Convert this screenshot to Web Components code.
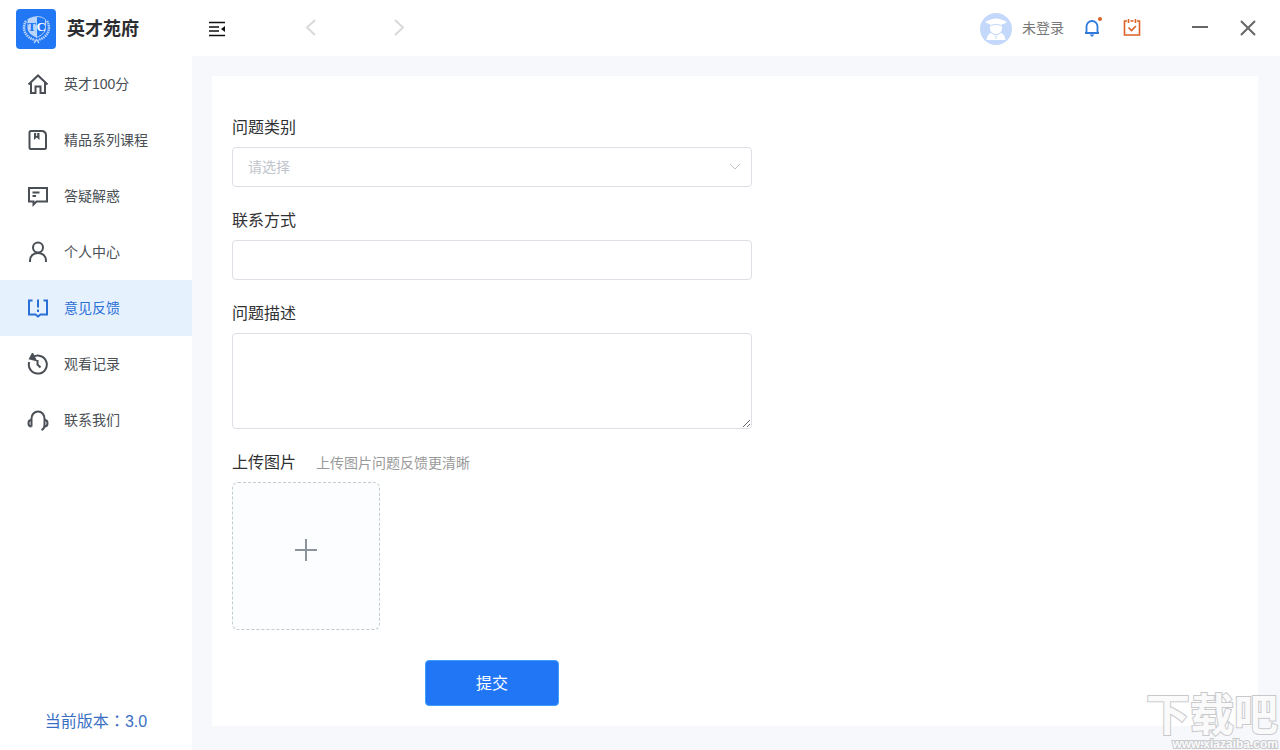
<!DOCTYPE html>
<html lang="zh-CN">
<head>
<meta charset="utf-8">
<meta name="viewport" content="width=device-width, initial-scale=1">
<title>英才苑府</title>
<style>
  html, body {
    height: 100%;
    margin: 0;
  }
  body {
    font-family: "Liberation Sans", "Noto Sans CJK SC", sans-serif;
    font-size: 14px;
    color: #303133;
  }
</style>
</head>
<body>
<yc-app></yc-app>

<script>
/**
 * Creates a template element from markup.
 *
 * @param {string} html The markup.
 * @returns {HTMLTemplateElement} The template.
 */
function createTemplate (html) {
  const template = document.createElement('template')
  template.innerHTML = html
  return template
}

/**
 * Base class that clones the static template of the subclass into a shadow root.
 */
class YcElement extends HTMLElement {
  /**
   * Attaches the shadow root.
   */
  constructor () {
    super()
    this.attachShadow({ mode: 'open' })
    this.shadowRoot.appendChild(this.constructor.template.content.cloneNode(true))
  }
}

const icons = {
  home: '<path d="M1.500 11.500 11 2.500l9.500 9M4 10V20h4.500v-6.500h5V20H18V10"/>',
  course: '<path d="M4 2h10.500Q19 2 19 6.500V18.500a1.500 1.500 0 0 1-1.500 1.500H4a1.500 1.500 0 0 1-1.500-1.500v-15A1.500 1.500 0 0 1 4 2z"/><path d="M7 4h5.500v7L9.700 8.500 7 11z" fill="currentColor" stroke="none"/><path d="M9.700 4v3" stroke="#fff" stroke-width="1"/>',
  question: '<path d="M2 3h18v13.500H9.500L6.500 19.500V16.500H2z"/><path d="M5.500 7.500h7M5.500 11h3.500"/>',
  person: '<circle cx="11" cy="6.500" r="5"/><path d="M3 21v-1.500c0-4.500 3.500-7.500 8-7.500s8 3 8 7.500V21"/>',
  feedback: '<path d="M5.500 3.500H2v14h6.500L11 19.500l2.500-2H20v-14h-3.500"/><path d="M11 2.500v8M11 12.500v2.500"/>',
  history: '<path d="M6 4A9 9 0 1 1 2.200 9"/><path d="M5.500 1 3 5.500l5.500 1.500z" fill="currentColor"/><path d="M10.500 7v4.500l3 3"/>',
  contact: '<path d="M4.500 17.500V9.500a6.500 7 0 0 1 13 0v7q0 3-3 4.500"/><path d="M4.500 11c-2 0-3 1.300-3 3.200s1 3.300 3 3.300M17.500 11c2 0 3 1.300 3 3.200s-1 3.300-3 3.300"/>'
}

customElements.define('yc-nav-item',
  /**
   * Represents one entry of the side menu.
   */
  class extends YcElement {
    static template = createTemplate(`
      <style>
        :host {
          display: block;
          color: #4a4f55;
        }
        :host([active]) {
          background-color: #e6f1fe;
          color: #2a6fd6;
        }
        a {
          display: flex;
          align-items: center;
          gap: 15px;
          height: 56px;
          padding: 0 27px;
          color: inherit;
          text-decoration: none;
        }
        span {
          padding-bottom: 2px;
        }
        svg {
          flex: none;
          width: 22px;
          height: 22px;
          fill: none;
          stroke: currentColor;
          stroke-width: 2;
        }
      </style>
      <a href="#"><svg viewBox="0 0 22 22" aria-hidden="true"></svg><span><slot></slot></span></a>
    `)

    /**
     * Called after the element is inserted to the DOM.
     */
    connectedCallback () {
      this.shadowRoot.querySelector('svg').innerHTML = icons[this.getAttribute('icon')]
      if (this.hasAttribute('active')) {
        this.shadowRoot.querySelector('a').setAttribute('aria-current', 'page')
      }
    }
  }
)

customElements.define('yc-brand',
  /**
   * Represents the logo and the name of the application.
   */
  class extends YcElement {
    static template = createTemplate(`
      <style>
        :host {
          display: flex;
          align-items: center;
          gap: 11px;
          height: 58px;
          padding: 0 16px;
        }
        svg {
          flex: none;
          width: 40px;
          height: 40px;
        }
        text {
          font-family: "Liberation Serif", serif;
          font-size: 13px;
          font-weight: bold;
        }
        h1 {
          margin: 0;
          font-size: 18px;
          line-height: 40px;
          color: #2b2d30;
        }
      </style>
      <svg viewBox="0 0 40 40" aria-hidden="true">
        <rect width="40" height="40" rx="4" fill="#2277f5"/>
        <path d="M20.500 7.500c-5 0-8 2-9 3v8c0 5 4 8 9 10z" fill="#b9d4fd"/>
        <path d="M20.500 7.500c5 0 8 2 9 3v8c0 5-4 8-9 10z" fill="none" stroke="#b9d4fd"/>
        <path d="M10 12C5 20 10 29 19 31M31 12c5 8 0 17-9 19" fill="none" stroke="#b9d4fd" stroke-width="2.500" stroke-dasharray="1.500 .7"/>
        <path d="m18 34 2.500-3.500L23 34" fill="none" stroke="#b9d4fd" stroke-width="1.300"/>
        <text x="11.500" y="22" fill="#2277f5">T</text>
        <text x="20.500" y="22" fill="#fff">C</text>
      </svg>
      <h1><slot></slot></h1>
    `)
  }
)

customElements.define('yc-sidebar',
  /**
   * Represents the side menu.
   */
  class extends YcElement {
    static template = createTemplate(`
      <style>
        :host {
          display: flex;
          flex-direction: column;
          width: 192px;
          flex: none;
          background-color: #fff;
        }
        yc-brand {
          margin-bottom: -2px;
        }
        nav {
          flex: 1;
        }
        footer {
          padding: 0 0 16px;
          font-size: 16px;
          line-height: 24px;
          text-align: center;
          color: #3a6fc4;
        }
        .colon {
          font-family: "Noto Sans CJK TC", sans-serif;
          line-height: 1;
        }
      </style>
      <yc-brand>英才苑府</yc-brand>
      <nav>
        <yc-nav-item icon="home">英才100分</yc-nav-item>
        <yc-nav-item icon="course">精品系列课程</yc-nav-item>
        <yc-nav-item icon="question">答疑解惑</yc-nav-item>
        <yc-nav-item icon="person">个人中心</yc-nav-item>
        <yc-nav-item icon="feedback" active>意见反馈</yc-nav-item>
        <yc-nav-item icon="history">观看记录</yc-nav-item>
        <yc-nav-item icon="contact">联系我们</yc-nav-item>
      </nav>
      <footer>当前版本<span class="colon" lang="zh-TW">：</span>3.0</footer>
    `)
  }
)

customElements.define('yc-header',
  /**
   * Represents the title bar with history, account and window buttons.
   */
  class extends YcElement {
    static template = createTemplate(`
      <style>
        :host {
          display: flex;
          align-items: center;
          justify-content: space-between;
          height: 56px;
          flex: none;
          padding: 0 20px 0 13px;
          background-color: #fff;
        }
        div {
          display: flex;
          align-items: center;
        }
        button {
          display: flex;
          align-items: center;
          justify-content: center;
          width: 24px;
          height: 32px;
          padding: 0;
          border: 0;
          background: none;
          color: #666;
        }
        svg {
          width: 24px;
          height: 24px;
          fill: none;
          stroke: currentColor;
        }
        .menu {
          color: #111;
          margin-right: 70px;
        }
        .history {
          gap: 64px;
        }
        .history button {
          color: #d9d9d9;
        }
        .account {
          width: auto;
          gap: 10px;
          margin-right: 16px;
          font: inherit;
          color: #777;
        }
        .account svg {
          width: 32px;
          height: 34px;
          stroke: none;
        }
        .account span {
          padding-bottom: 2px;
        }
        .tools {
          gap: 16px;
          margin-right: 44px;
        }
        .bell {
          color: #2f78dc;
        }
        .task {
          color: #dc6124;
        }
        .window {
          gap: 24px;
        }
      </style>
      <div>
        <button class="menu" aria-label="收起菜单">
          <svg viewBox="0 0 24 24"><path d="M4 6.500h16M4 11h10M4 15h10M4 19.500h16" stroke-width="1.700"/><path d="m20 10-4 3 4 3z" fill="currentColor" stroke="none"/></svg>
        </button>
        <div class="history">
          <button aria-label="后退"><svg viewBox="0 0 24 24"><path d="m16 4-8 7.500 8 7.500" stroke-width="2"/></svg></button>
          <button aria-label="前进"><svg viewBox="0 0 24 24"><path d="m8 4 8 7.500L8 19" stroke-width="2"/></svg></button>
        </div>
      </div>
      <div>
        <button class="account">
          <svg viewBox="0 -1 32 34" aria-hidden="true">
            <circle cx="16" cy="17" r="16" fill="#c3d8fa"/>
            <path d="M5 10c4-2 8-3.500 11-3.500S23 8 27 10c-2 1.500-3.500 2-5 2.500v4.500c-.5 3-3 5-6 5s-5.500-2-6-5v-4.500c-1.500-.5-3-1-5-2.500z" fill="#fff"/>
            <path d="M10 13.500q6-2.500 12 0M7.500 11v5" fill="none" stroke="#c3d8fa"/>
            <path d="M6.500 28c.5-4 2-6.500 5.500-7.500 2 3 6 3 8 0 3.500 1 5 3.500 5.500 7.500z" fill="#fff"/>
            <path d="M11 20.300q5 5.500 10 0" fill="none" stroke="#c3d8fa"/>
            <path d="M15.500 24h1v3h-1z" fill="#c3d8fa"/>
          </svg>
          <span>未登录</span>
        </button>
        <div class="tools">
          <button class="bell" aria-label="消息">
            <svg viewBox="0 0 24 24"><path d="M5 17h14M6.500 17v-6.500a5.500 5.500 0 0 1 11 0V17" stroke-width="1.800"/><path d="M9.500 18.500h5l-2.500 2.500z" fill="currentColor" stroke="none"/><circle cx="20" cy="3" r="2" fill="#dc6124" stroke="none"/></svg>
          </button>
          <button class="task" aria-label="任务">
            <svg viewBox="0 0 24 24"><path d="M7 5H4.500v14h15V5H17M10.500 5h3" stroke-width="1.600"/><path d="M8.500 3v4M15.500 3v4M8.500 11.500l3 3 4.500-4.500" stroke-width="1.600"/></svg>
          </button>
        </div>
        <div class="window">
          <button aria-label="最小化"><svg viewBox="0 0 24 24"><path d="M4 11h16" stroke-width="2"/></svg></button>
          <button aria-label="关闭"><svg viewBox="0 0 24 24"><path d="m5 5 14 14M19 5 5 19" stroke-width="2"/></svg></button>
        </div>
      </div>
    `)
  }
)

customElements.define('yc-field',
  /**
   * Represents a labelled row of a form.
   */
  class extends YcElement {
    static template = createTemplate(`
      <style>
        :host {
          display: flex;
          flex-direction: column;
          gap: 8px;
        }
        .label {
          display: flex;
          align-items: center;
          gap: 20px;
          font-size: 16px;
          line-height: 22px;
        }
        ::slotted([slot=hint]) {
          font-size: 14px;
          color: #999;
        }
      </style>
      <div class="label"><slot name="label"></slot><slot name="hint"></slot></div>
      <slot></slot>
    `)
  }
)

customElements.define('yc-feedback-form',
  /**
   * Represents the feedback form.
   */
  class extends YcElement {
    static template = createTemplate(`
      <style>
        :host {
          display: block;
        }
        form {
          display: flex;
          flex-direction: column;
          gap: 23px;
          max-width: 520px;
        }
        input, select, textarea {
          display: block;
          box-sizing: border-box;
          width: 100%;
          height: 40px;
          margin: 0;
          padding: 0 15px;
          border: 1px solid #dcdfe6;
          border-radius: 4px;
          background-color: #fff;
          font: inherit;
          color: #606266;
        }
        textarea {
          height: 96px;
          padding: 5px 15px;
        }
        .select {
          display: grid;
          align-items: center;
        }
        .select > * {
          grid-area: 1 / 1;
        }
        select {
          appearance: none;
        }
        select:invalid {
          color: #c0c4cc;
        }
        .select svg {
          justify-self: end;
          width: 14px;
          height: 14px;
          margin-right: 10px;
          fill: none;
          stroke: #c0c4cc;
          pointer-events: none;
        }
        .upload {
          display: flex;
          align-items: center;
          justify-content: center;
          box-sizing: border-box;
          width: 148px;
          height: 148px;
          padding: 0 0 12px;
          border: 1px dashed #c0ccd0;
          border-radius: 6px;
          background-color: #fbfdff;
        }
        .upload svg {
          width: 28px;
          height: 28px;
          stroke: #8c939d;
          stroke-width: 2;
        }
        .submit {
          align-self: center;
          width: 134px;
          height: 46px;
          margin-top: 7px;
          padding: 0 0 2px;
          border: 1px solid #409eff;
          border-radius: 4px;
          background-color: #2176f5;
          font: inherit;
          font-size: 16px;
          color: #fff;
        }
      </style>
      <form>
        <yc-field>
          <label slot="label" for="type">问题类别</label>
          <div class="select">
            <select id="type" required>
              <option value="" selected>请选择</option>
            </select>
            <svg viewBox="0 0 14 14" aria-hidden="true"><path d="m2 4 5 5 5-5"/></svg>
          </div>
        </yc-field>
        <yc-field>
          <label slot="label" for="contact">联系方式</label>
          <input id="contact" type="text">
        </yc-field>
        <yc-field>
          <label slot="label" for="description">问题描述</label>
          <textarea id="description"></textarea>
        </yc-field>
        <yc-field>
          <label slot="label" for="upload">上传图片</label>
          <span slot="hint">上传图片问题反馈更清晰</span>
          <button class="upload" id="upload" type="button">
            <svg viewBox="0 0 28 28" aria-hidden="true"><path d="M3 14h22M14 3v22"/></svg>
          </button>
        </yc-field>
        <button class="submit" type="submit">提交</button>
      </form>
    `)

    /**
     * Called after the element is inserted to the DOM.
     */
    connectedCallback () {
      this.shadowRoot.querySelector('form').addEventListener('submit', event => {
        event.preventDefault()
      })
    }
  }
)

customElements.define('yc-watermark',
  /**
   * Represents the site mark in the bottom right corner.
   */
  class extends YcElement {
    static template = createTemplate(`
      <style>
        :host {
          position: absolute;
          right: 2px;
          bottom: 0;
          display: flex;
          flex-direction: column;
          align-items: flex-end;
          pointer-events: none;
          color: #fafafb;
          font-weight: bold;
          paint-order: stroke;
          -webkit-text-stroke: 2px #c8c9cc;
        }
        .name {
          font-size: 44px;
          line-height: 44px;
        }
        .site {
          font-size: 12px;
          line-height: 12px;
        }
      </style>
      <span class="name">下载吧</span>
      <span class="site">www.xiazaiba.com</span>
    `)
  }
)

customElements.define('yc-app',
  /**
   * Represents the application window.
   */
  class extends YcElement {
    static template = createTemplate(`
      <style>
        :host {
          position: relative;
          display: flex;
          min-height: 100%;
          background-color: #f6f8fb;
        }
        .page {
          display: flex;
          flex-direction: column;
          flex: 1;
          min-width: 0;
        }
        main {
          flex: 1;
          margin: 20px 22px 24px 20px;
          padding: 41px 20px 20px;
          background-color: #fff;
        }
      </style>
      <yc-sidebar></yc-sidebar>
      <div class="page">
        <yc-header></yc-header>
        <main><yc-feedback-form></yc-feedback-form></main>
      </div>
      <yc-watermark></yc-watermark>
    `)
  }
)
</script>
</body>
</html>
